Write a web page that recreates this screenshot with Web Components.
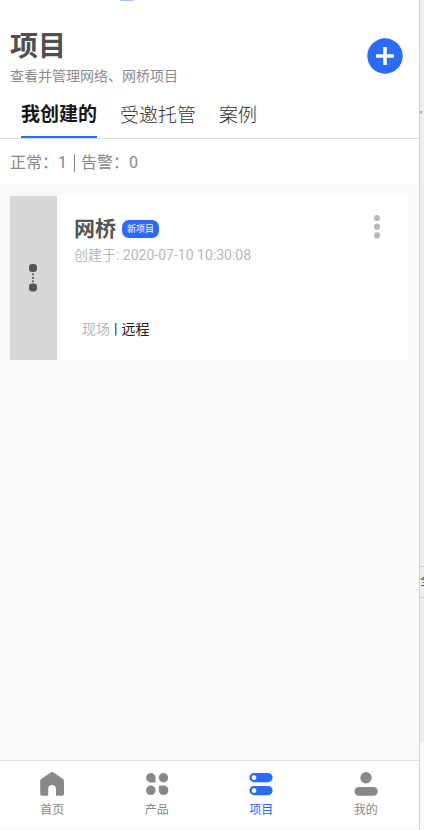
<!DOCTYPE html>
<html lang="zh-CN">
<head>
<meta charset="utf-8">
<meta name="viewport" content="width=device-width, initial-scale=1">
<title>项目</title>
<style>
html, body { height: 100%; }
body { margin: 0; background: #eee; font-family: Roboto, "Noto Sans CJK SC", sans-serif; color: #555; }
</style>
</head>
<body>
<project-app></project-app>
<script>
const define = (name, html, setup) => {
  const t = document.createElement('template');
  t.innerHTML = '<style>*{box-sizing:border-box}button{font:inherit;color:inherit;background:none;border:0;padding:0;cursor:pointer}a{color:inherit;text-decoration:none}h1,h2,p{margin:0}svg{display:block}</style>' + html;
  customElements.define(name, class extends HTMLElement {
    constructor() {
      super();
      this.attachShadow({ mode: 'open' }).append(t.content.cloneNode(true));
    }
    connectedCallback() { if (setup) setup(this, this.shadowRoot); }
  });
};

define('page-header', `
<style>
:host { display: flex; justify-content: space-between; align-items: flex-start; padding: 26px 16px 0 10px; }
h1 { padding-top: 2px; font-size: 28px; line-height: 38px; font-weight: 700; color: #505050; }
p { font-size: 14px; line-height: 20px; color: #8c8c8c; }
button { margin-top: 12px; width: 36px; height: 36px; }
</style>
<div><h1><slot name="title"></slot></h1><p><slot></slot></p></div>
<button type="button" aria-label="新建项目"><svg width="36" height="36" viewBox="0 0 36 36"><circle cx="18" cy="18" r="17.7" fill="#2a6bfb"/><path d="M9 18h18M18 9v18" stroke="#fff" stroke-width="3.6"/></svg></button>`);

define('tab-bar', `
<style>
:host { display: flex; gap: 23px; padding: 12px 21px 0; border-bottom: 1px solid #ddd; }
</style>
<slot></slot>`);

define('tab-item', `
<style>
:host { display: block; }
button { display: block; height: 40px; padding-bottom: 4px; font-size: 19px; line-height: 28px; font-weight: 300; color: #333; border-bottom: 2px solid transparent; }
:host(:not([active])) button { padding-bottom: 2px; }
:host([active]) button { font-weight: 700; color: #161616; border-color: #2a6bfb; }
</style>
<button type="button"><slot></slot></button>`);

define('status-line', `
<style>
:host { display: flex; align-items: center; height: 45px; padding: 2px 10px 0; font-size: 16px; line-height: 24px; color: #888; }
i { width: 1px; height: 18px; margin: 0 6px 0 7px; background: #888; }
</style>
<slot name="normal"></slot><i></i><slot name="alarm"></slot>`);

define('new-badge', `
<style>
:host { display: block; padding: 0 5px; border-radius: 7px; background: #2a6bfb; color: #fff; font-size: 9px; line-height: 18px; }
</style>
<slot></slot>`);

define('project-card', `
<style>
:host { display: flex; min-height: 164px; background: #fff; }
.side { width: 47px; background: #d8d8d8; display: flex; align-items: center; justify-content: center; }
.main { flex: 1; display: flex; flex-direction: column; justify-content: space-between; padding: 18px 0 20px 17px; }
.head { display: flex; align-items: center; gap: 6px; }
h2 { font-size: 21px; line-height: 30px; font-weight: 700; color: #555; }
.date { font-size: 14px; line-height: 22px; color: #b8b8b8; }
.modes { display: flex; gap: 4px; padding-left: 8px; font-size: 14px; line-height: 22px; color: #222; }
.off { color: #b8b8b8; }
.more { width: 10px; height: 26px; margin: 18px 26px 0 0; }
</style>
<div class="side"><svg width="10" height="28" viewBox="0 0 10 28" fill="#555"><rect x="0" y="0" width="8" height="8" rx="3.2"/><rect x="0" y="19.500" width="8" height="8" rx="3.2"/><path d="M3.100 9.500h1.800v1.800H3.100zm0 3.500h1.800v1.800H3.100zm0 3.400h1.800v1.800H3.100z"/></svg></div>
<div class="main">
<div><div class="head"><h2><slot name="name"></slot></h2><slot name="badge"></slot></div><p class="date"><slot name="date"></slot></p></div>
<div class="modes"><button type="button" class="off">现场</button><span>|</span><button type="button">远程</button></div>
</div>
<button type="button" class="more" aria-label="更多"><svg width="10" height="26" viewBox="0 0 10 26" fill="#b9b9b9"><circle cx="5" cy="4" r="3.1"/><circle cx="5" cy="12.7" r="3.1"/><circle cx="5" cy="21.4" r="3.1"/></svg></button>`);

const icons = {
  home: '<path d="M11.1 1.3a2 2 0 0 1 2.1 0l9.4 6.4c1 .7 1.4 1.4 1.4 2.5v12.6c0 1.2-.7 1.9-1.9 1.9H16V18a3.9 3.9 0 0 0-7.8 0v6.7H2.1C.9 24.7.2 24 .2 22.8V10.2c0-1.1.4-1.8 1.4-2.5z"/>',
  grid: '<path d="M5.8 2a4.8 4.8 0 0 1 4.8 4.8v3.6a1 1 0 0 1-1 1H5.8a4.700 4.700 0 0 1 0-9.400z"/><circle cx="18.500" cy="6.700" r="4.700"/><circle cx="5.800" cy="19.300" r="4.800"/><path d="M14.800 14.500h3.700a4.800 4.800 0 1 1-4.700 4.800v-3.800a1 1 0 0 1 1-1z"/>',
  project: '<path fill-rule="evenodd" d="M5 2h14a4.600 4.600 0 0 1 0 9.200H5A4.600 4.600 0 0 1 5 2zm0 2.200a2.400 2.400 0 1 0 0 4.800 2.400 2.400 0 0 0 0-4.800zM5 15h14a4.600 4.600 0 0 1 0 9.200H5A4.600 4.600 0 0 1 5 15zm0 2.200a2.400 2.400 0 1 0 0 4.800 2.400 2.400 0 0 0 0-4.800z"/>',
  user: '<circle cx="12" cy="6.700" r="5.700"/><rect x=".400" y="16" width="23.400" height="8.800" rx="4.400"/>'
};
define('nav-item', `
<style>
:host { flex: 1; color: #888; }
:host([active]) { color: #2a6bfb; }
a { display: flex; flex-direction: column; align-items: center; gap: 4px; padding-top: 10px; font-size: 12px; line-height: 18px; }
</style>
<a href="#"><svg width="24" height="26" viewBox="0 0 24 26" fill="currentColor" aria-hidden="true"></svg><slot></slot></a>`,
(el, root) => { root.querySelector('svg').innerHTML = icons[el.getAttribute('icon')]; });

define('bottom-nav', `
<style>
:host { display: block; border-top: 1px solid #e2e2e2; padding-bottom: 5px; background: #fafafa; }
nav { display: flex; height: 64px; padding-right: 1px; background: #fff; }
</style>
<nav><slot></slot></nav>`);

define('edge-strip', `
<style>
:host { display: grid; grid-template-rows: 566fr 32px 144fr 88fr; width: 5px; overflow: hidden; border-left: 1px solid #d0d0d0; background: #eee; color: #555; white-space: nowrap; }
.a { padding-top: 101px; font-size: 10px; line-height: 16px; color: #557; }
.b { border: solid #ccc; border-width: 1px 0; font-size: 14px; line-height: 26px; }
.d { background: #fafafa; }
</style>
<div class="a">,</div><div class="b">全</div><div class="c"></div><div class="d"></div>`);

define('project-app', `
<style>
:host { display: flex; min-height: 100%; }
.screen { flex: 1; min-width: 0; display: flex; flex-direction: column; background: #fafafa; }
.top { background: #fff; position: relative; }
.mark { position: absolute; top: 0; left: 120px; width: 14px; height: 1px; background: #a5c8f8; }
main { flex: 1; padding: 12px 11px 12px 10px; }
</style>
<div class="screen">
<div class="top">
<div class="mark"></div>
<page-header><span slot="title">项目</span>查看并管理网络、网桥项目</page-header>
<tab-bar><tab-item active>我创建的</tab-item><tab-item>受邀托管</tab-item><tab-item>案例</tab-item></tab-bar>
<status-line><span slot="normal">正常：1</span><span slot="alarm">告警：0</span></status-line>
</div>
<main><project-card><span slot="name">网桥</span><new-badge slot="badge">新项目</new-badge><span slot="date">创建于: 2020-07-10 10:30:08</span></project-card></main>
<bottom-nav><nav-item icon="home">首页</nav-item><nav-item icon="grid">产品</nav-item><nav-item icon="project" active>项目</nav-item><nav-item icon="user">我的</nav-item></bottom-nav>
</div>
<edge-strip></edge-strip>`);
</script>
</body>
</html>
